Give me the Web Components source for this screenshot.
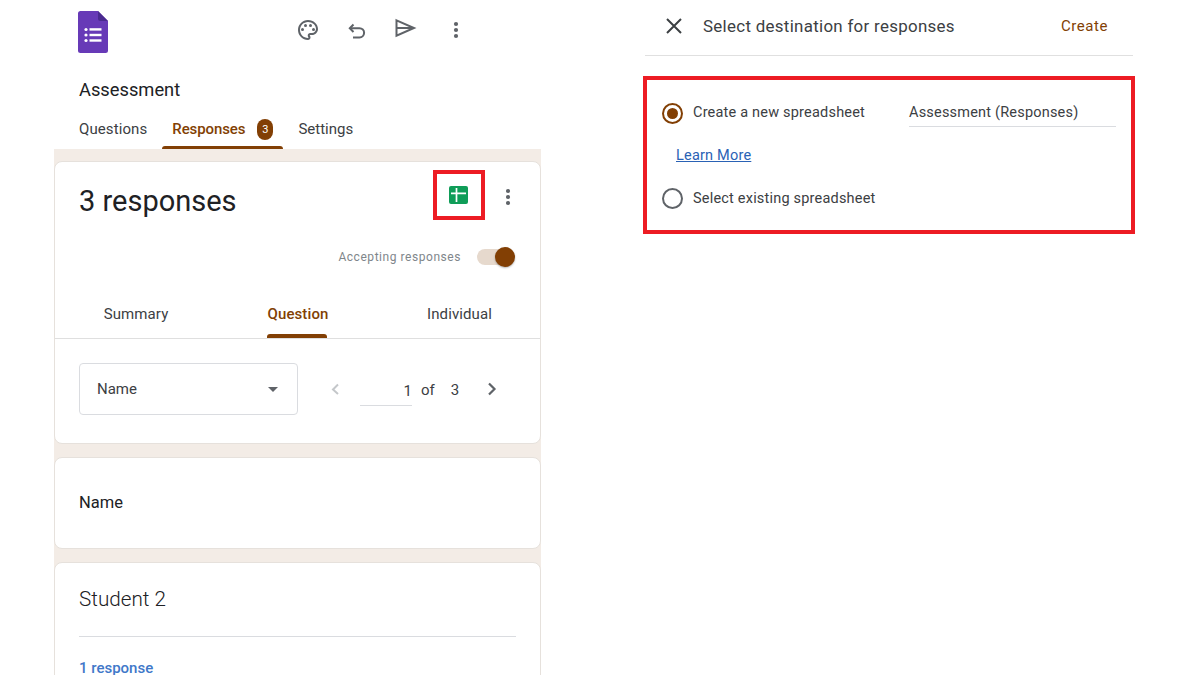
<!DOCTYPE html>
<html>
<head>
<meta charset="utf-8">
<title>Forms responses</title>
<style>
html,body{margin:0;padding:0;width:1200px;height:675px;overflow:hidden;background:#fff;font-family:Roboto,"Liberation Sans",sans-serif;}
.page{display:flex;width:1200px;height:675px;padding-left:54px;box-sizing:border-box;}
</style>
</head>
<body>
<div class="page">
  <forms-phone>
    <forms-toolbar></forms-toolbar>
    <forms-tabs></forms-tabs>
    <div slot="cards">
      <responses-card></responses-card>
      <forms-card height="92"><question-title>Name</question-title></forms-card>
      <forms-card height="140"><answer-group></answer-group></forms-card>
    </div>
  </forms-phone>
  <destination-panel></destination-panel>
</div>

<script>
(function () {
  const BROWN = "#823f04";
  const ICON = "#5f6368";

  const MORE = `<svg width="24" height="24" viewBox="0 0 24 24" fill="${ICON}"><circle cx="12" cy="6" r="2.1"/><circle cx="12" cy="12" r="2.1"/><circle cx="12" cy="18" r="2.1"/></svg>`;

  class FormsPhone extends HTMLElement {
    constructor() {
      super();
      this.attachShadow({ mode: "open" });
      this.shadowRoot.innerHTML = `
        <style>
        :host{display:flex;flex-direction:column;width:487px;height:675px;flex:none;}
        .cards{flex:1;background:#f3ece6;padding-top:12px;overflow:hidden;}
        ::slotted(div){display:flex;flex-direction:column;gap:13px;}
        </style>
        <slot></slot>
        <div class="cards"><slot name="cards"></slot></div>
      `;
    }
  }

  class FormsToolbar extends HTMLElement {
    constructor() {
      super();
      this.attachShadow({ mode: "open" });
      this.shadowRoot.innerHTML = `
        <style>
        :host{display:block;height:107px;padding-left:24px;color:#202124;}
        .bar{display:flex;height:73px;}
        .logo{margin-top:11px;width:30px;height:42px;flex:none;}
        .icons{display:flex;margin-left:188px;margin-top:18px;height:24px;}
        .icons svg{display:block;}
        .i2{margin-left:25px;}
        .i3{margin-left:24px;}
        .i4{margin-left:27px;}
        .name{font-size:18.3px;line-height:24px;margin:5px 0 0 1px;}
        </style>
        <div class="bar">
          <svg class="logo" viewBox="0 0 30 42">
            <path d="M2.5 0H20L30 10V39.5A2.5 2.5 0 0 1 27.5 42H2.5A2.5 2.5 0 0 1 0 39.5V2.5A2.5 2.5 0 0 1 2.5 0Z" fill="#673ab7"/>
            <path d="M20 0L30 10H22.5A2.5 2.5 0 0 1 20 7.5Z" fill="#4a2a8f"/>
            <g fill="#fff">
              <circle cx="8" cy="18.5" r="1.6"/><circle cx="8" cy="24" r="1.6"/><circle cx="8" cy="29.5" r="1.6"/>
              <rect x="11.5" y="17.2" width="12" height="2.4"/><rect x="11.5" y="22.8" width="12" height="2.4"/><rect x="11.5" y="28.3" width="12" height="2.4"/>
            </g>
          </svg>
          <div class="icons">
            <svg width="24" height="24" viewBox="0 0 24 24" fill="${ICON}"><path d="M12 2C6.49 2 2 6.49 2 12s4.49 10 10 10c1.38 0 2.5-1.12 2.5-2.5 0-.61-.23-1.2-.64-1.67-.08-.1-.13-.21-.13-.33 0-.28.22-.5.5-.5H16c3.31 0 6-2.69 6-6 0-4.96-4.49-9-10-9zm4 13h-1.77c-1.38 0-2.5 1.12-2.5 2.5 0 .61.22 1.19.63 1.65.06.07.14.19.14.35 0 .28-.22.5-.5.5-4.41 0-8-3.59-8-8s3.59-8 8-8 8 3.14 8 7c0 2.21-1.79 4-4 4z"/><circle cx="6.5" cy="11.5" r="1.5"/><circle cx="9.5" cy="7.5" r="1.5"/><circle cx="14.5" cy="7.5" r="1.5"/><circle cx="17.5" cy="11.5" r="1.5"/></svg>
            <svg class="i2" width="24" height="24" viewBox="0 0 24 24" fill="none" stroke="${ICON}" stroke-width="2"><path d="M8.5 6.5L4.8 10.2 8.5 14"/><path d="M5 10.2H14.5A4.6 4.6 0 0 1 14.5 19.4H8"/></svg>
            <svg class="i3" style="margin-top:-2px" width="24" height="24" viewBox="0 0 24 24" fill="none" stroke="${ICON}" stroke-width="2"><path d="M3.5 4.3L21 12 3.5 19.7Z"/><path d="M3.5 12H20"/></svg>
            <span class="i4">${MORE}</span>
          </div>
        </div>
        <div class="name">Assessment</div>
      `;
    }
  }

  class FormsTabs extends HTMLElement {
    constructor() {
      super();
      this.attachShadow({ mode: "open" });
      this.shadowRoot.innerHTML = `
        <style>
        :host{display:flex;height:42px;font-size:15px;color:#3c4043;padding-left:25px;}
        .tab{display:flex;align-items:center;height:42px;padding-top:2px;box-sizing:border-box;position:relative;}
        .first{letter-spacing:.1px;}
        .active{color:${BROWN};font-weight:500;margin-left:15px;padding-left:10px;padding-right:10px;letter-spacing:-.1px;}
        .active::after{content:"";position:absolute;left:0;right:0;bottom:0;height:3px;background:${BROWN};border-radius:3px 3px 0 0;}
        .badge{width:16px;height:21px;border-radius:8px;background:${BROWN};color:#fff;font-size:11px;display:flex;align-items:center;justify-content:center;margin-left:12px;font-weight:400;}
        .last{margin-left:15px;}
        </style>
        <div class="tab first">Questions</div>
        <div class="tab active">Responses<span class="badge">3</span></div>
        <div class="tab last">Settings</div>
      `;
    }
  }

  class FormsCard extends HTMLElement {
    constructor() {
      super();
      this.attachShadow({ mode: "open" });
      this.shadowRoot.innerHTML = `
        <style>
        :host{display:block;box-sizing:border-box;background:#fff;border:1px solid #e6e1dc;border-radius:8px;flex:none;overflow:hidden;}
        </style>
        <slot></slot>
      `;
    }
    connectedCallback() {
      const h = this.getAttribute("height");
      if (h) this.style.height = h + "px";
    }
  }

  class ResponsesCard extends HTMLElement {
    constructor() {
      super();
      this.attachShadow({ mode: "open" });
      this.shadowRoot.innerHTML = `
        <style>
        :host{display:block;box-sizing:border-box;height:283px;background:#fff;border:1px solid #e6e1dc;border-radius:8px;flex:none;overflow:hidden;color:#202124;}
        .top{display:flex;height:78px;padding:8px 20px 0 24px;}
        .count{flex:1;font-size:29px;line-height:62px;}
        .hl{width:52px;height:50px;box-sizing:border-box;border:4px solid #ed1c24;display:flex;align-items:center;justify-content:center;margin-right:11px;}
        .hl svg{margin-left:-1px;}
        .more{margin-top:15px;}
        .accept{display:flex;justify-content:flex-end;align-items:center;height:24px;margin-top:-3px;padding-right:25px;}
        .label{font-size:12px;color:#80868b;letter-spacing:.55px;margin-right:16px;}
        .toggle{width:38px;height:24px;display:flex;align-items:center;position:relative;}
        .track{width:32px;height:16px;border-radius:8px;background:#e6d9cd;}
        .thumb{position:absolute;right:0;top:2px;width:20px;height:20px;border-radius:50%;background:${BROWN};box-shadow:0 1px 2px rgba(0,0,0,.3);}
        .tabs{display:grid;grid-template-columns:162px 162px 1fr;height:58px;margin-top:12px;border-bottom:1px solid #dfdfdf;font-size:15px;text-align:center;box-sizing:border-box;}
        .tabs div{display:flex;justify-content:center;position:relative;padding-top:24px;letter-spacing:.1px;color:#3c4043;}
        .tabs .on{color:${BROWN};font-weight:500;}
        .tabs .on::after{content:"";position:absolute;left:50px;width:60px;height:4px;bottom:0;background:${BROWN};border-radius:3px 3px 0 0;}
        .pick{display:flex;align-items:flex-start;padding:24px 0 0 24px;}
        .select{width:219px;height:52px;box-sizing:border-box;border:1px solid #dadce0;border-radius:4px;display:flex;align-items:center;padding:0 19px 0 17px;font-size:15px;color:#3c4043;}
        .select span{flex:1;}
        .caret{width:0;height:0;border-left:5px solid transparent;border-right:5px solid transparent;border-top:5px solid ${ICON};}
        .pager{display:flex;align-items:center;height:51px;font-size:15px;color:#3c4043;}
        .input{width:52px;height:30px;margin:4px 0 0 12px;box-sizing:border-box;border-bottom:1px solid #dadce0;text-align:right;padding:7px 0 0;line-height:16px;}
        .chev{display:block;}
        </style>
        <div class="top">
          <div class="count">3 responses</div>
          <div class="hl">
            <svg width="19" height="18" viewBox="0 0 19 18"><rect width="19" height="18" rx="2" fill="#0f9d58"/><path d="M2 7.3H17M7.5 2V16" stroke="#fff" stroke-width="1.7" fill="none"/></svg>
          </div>
          <div class="more">${MORE}</div>
        </div>
        <div class="accept">
          <span class="label">Accepting responses</span>
          <div class="toggle"><div class="track"></div><div class="thumb"></div></div>
        </div>
        <div class="tabs">
          <div>Summary</div><div class="on">Question</div><div>Individual</div>
        </div>
        <div class="pick">
          <div class="select"><span>Name</span><i class="caret"></i></div>
          <div class="pager">
            <svg class="chev" style="margin-left:26px" width="24" height="24" viewBox="0 0 24 24" fill="none" stroke="#c4c7ca" stroke-width="2"><path d="M14 7.5L9 12.5 14 17"/></svg>
            <div class="input">1</div>
            <span style="margin:2px 0 0 9px">of</span>
            <span style="margin:2px 0 0 16px">3</span>
            <svg class="chev" style="margin-left:21px" width="24" height="24" viewBox="0 0 24 24" fill="none" stroke="${ICON}" stroke-width="2.2"><path d="M9 6.5L14.5 12 9 17.5"/></svg>
          </div>
        </div>
      `;
    }
  }

  class QuestionTitle extends HTMLElement {
    constructor() {
      super();
      this.attachShadow({ mode: "open" });
      this.shadowRoot.innerHTML = `
        <style>
        :host{display:flex;align-items:center;height:88px;padding-left:24px;font-size:16.5px;color:#202124;}
        </style>
        <slot></slot>
      `;
    }
  }

  class AnswerGroup extends HTMLElement {
    constructor() {
      super();
      this.attachShadow({ mode: "open" });
      this.shadowRoot.innerHTML = `
        <style>
        :host{display:block;padding:22px 24px 0 24px;}
        .title{font-size:20.7px;font-weight:300;line-height:28px;color:#202124;padding-bottom:23px;border-bottom:1px solid #dadce0;}
        .count{font-size:15px;font-weight:500;color:#3f78c9;margin-top:23px;line-height:16px;}
        </style>
        <div class="title">Student 2</div>
        <div class="count">1 response</div>
      `;
    }
  }

  class DestinationPanel extends HTMLElement {
    constructor() {
      super();
      this.attachShadow({ mode: "open" });
      this.shadowRoot.innerHTML = `
        <style>
        :host{display:block;width:492px;margin-left:102px;flex:none;color:#3c4043;}
        .head{display:flex;align-items:center;height:56px;margin:0 2px;box-sizing:border-box;border-bottom:1px solid #e0e0e0;padding-bottom:4px;}
        .close{margin-left:19px;display:block;}
        .title{flex:1;margin-left:19px;font-size:16.9px;font-weight:400;letter-spacing:.3px;color:#3c4043;}
        .create{font-size:15px;font-weight:400;color:${BROWN};letter-spacing:.55px;margin-right:25px;}
        .box{box-sizing:border-box;height:158px;margin-top:20px;border:4px solid #ed1c24;padding:0 15px;font-size:14.5px;letter-spacing:.2px;}
        .row{display:flex;align-items:center;}
        .row1{height:24px;margin-top:21px;align-items:flex-start;}
        .row1 .radio{margin-top:1.5px;}
        .row1 .opt{margin-top:2.5px;}
        .radio{width:21px;height:21px;box-sizing:border-box;border-radius:50%;border:2px solid #5f6368;flex:none;display:flex;align-items:center;justify-content:center;margin-right:10px;}
        .radio.on{border-color:${BROWN};}
        .radio.on i{width:11px;height:11px;border-radius:50%;background:${BROWN};display:block;}
        .opt{width:216px;flex:none;}
        .field{width:207px;height:26px;box-sizing:border-box;border-bottom:1px solid #dadce0;line-height:24px;}
        .learn{display:block;margin:21px 0 0 14px;color:#2a62b5;text-decoration:underline;line-height:20px;}
        .row2{height:24px;margin-top:20px;}
        </style>
        <div class="head">
          <svg class="close" width="20" height="20" viewBox="0 0 20 20" stroke="#3c4043" stroke-width="2" fill="none"><path d="M3 3L17 17M17 3L3 17"/></svg>
          <div class="title">Select destination for responses</div>
          <div class="create">Create</div>
        </div>
        <div class="box">
          <div class="row row1">
            <span class="radio on"><i></i></span>
            <span class="opt">Create a new spreadsheet</span>
            <span class="field">Assessment (Responses)</span>
          </div>
          <a class="learn">Learn More</a>
          <div class="row row2">
            <span class="radio"></span>
            <span class="opt">Select existing spreadsheet</span>
          </div>
        </div>
      `;
    }
  }

  customElements.define("forms-phone", FormsPhone);
  customElements.define("forms-toolbar", FormsToolbar);
  customElements.define("forms-tabs", FormsTabs);
  customElements.define("forms-card", FormsCard);
  customElements.define("responses-card", ResponsesCard);
  customElements.define("question-title", QuestionTitle);
  customElements.define("answer-group", AnswerGroup);
  customElements.define("destination-panel", DestinationPanel);
})();
</script>
</body>
</html>
